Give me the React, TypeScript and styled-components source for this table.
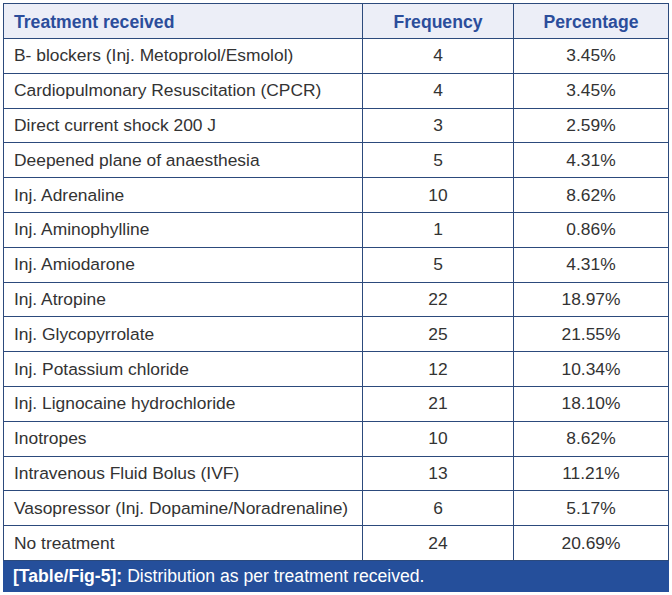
import React from "react";
import styled, { createGlobalStyle } from "styled-components";

const Global = createGlobalStyle`
  html, body { margin: 0; padding: 0; background: #ffffff; }
  body { font-family: "Liberation Sans", Arial, sans-serif; }
`;

const Wrap = styled.div`
  padding: 3px 4px 0 3px;
  width: 665px;
`;

const Table = styled.table`
  border-collapse: collapse;
  width: 665px;
  table-layout: fixed;
  font-family: "Liberation Sans", Arial, sans-serif;
`;

const HeadCell = styled.th<{ $align?: string }>`
  background: #eceef7;
  color: #2b4d9b;
  font-weight: bold;
  font-size: 17.6px;
  text-align: ${(p) => p.$align || "center"};
  padding: 2px 10px 0;
  height: 32px;
  border: 1px solid #2c4a7c;
`;

const Cell = styled.td<{ $align?: string }>`
  color: #333333;
  font-size: 17.4px;
  text-align: ${(p) => p.$align || "center"};
  padding: 0 10px;
  height: 33.8px;
  border: 1px solid #2c4a7c;
  white-space: nowrap;
`;

const Caption = styled.div`
  background: #254f9b;
  color: #ffffff;
  font-size: 17.6px;
  height: 31px;
  display: flex;
  align-items: center;
  padding: 0 10px;
  width: 646px;
  white-space: nowrap;
  b { font-weight: bold; margin-right: 5px; }
`;

const rows: [string, string, string][] = [
  ["B- blockers (Inj. Metoprolol/Esmolol)", "4", "3.45%"],
  ["Cardiopulmonary Resuscitation (CPCR)", "4", "3.45%"],
  ["Direct current shock 200 J", "3", "2.59%"],
  ["Deepened plane of anaesthesia", "5", "4.31%"],
  ["Inj. Adrenaline", "10", "8.62%"],
  ["Inj. Aminophylline", "1", "0.86%"],
  ["Inj. Amiodarone", "5", "4.31%"],
  ["Inj. Atropine", "22", "18.97%"],
  ["Inj. Glycopyrrolate", "25", "21.55%"],
  ["Inj. Potassium chloride", "12", "10.34%"],
  ["Inj. Lignocaine hydrochloride", "21", "18.10%"],
  ["Inotropes", "10", "8.62%"],
  ["Intravenous Fluid Bolus (IVF)", "13", "11.21%"],
  ["Vasopressor (Inj. Dopamine/Noradrenaline)", "6", "5.17%"],
  ["No treatment", "24", "20.69%"],
];

export default function App() {
  return (
    <Wrap>
      <Global />
      <Table>
        <colgroup>
          <col style={{ width: 359 }} />
          <col style={{ width: 151 }} />
          <col style={{ width: 155 }} />
        </colgroup>
        <thead>
          <tr>
            <HeadCell $align="left">Treatment received</HeadCell>
            <HeadCell>Frequency</HeadCell>
            <HeadCell>Percentage</HeadCell>
          </tr>
        </thead>
        <tbody>
          {rows.map((r) => (
            <tr key={r[0]}>
              <Cell $align="left">{r[0]}</Cell>
              <Cell>{r[1]}</Cell>
              <Cell>{r[2]}</Cell>
            </tr>
          ))}
        </tbody>
      </Table>
      <Caption>
        <b>[Table/Fig-5]:</b> Distribution as per treatment received.
      </Caption>
    </Wrap>
  );
}
